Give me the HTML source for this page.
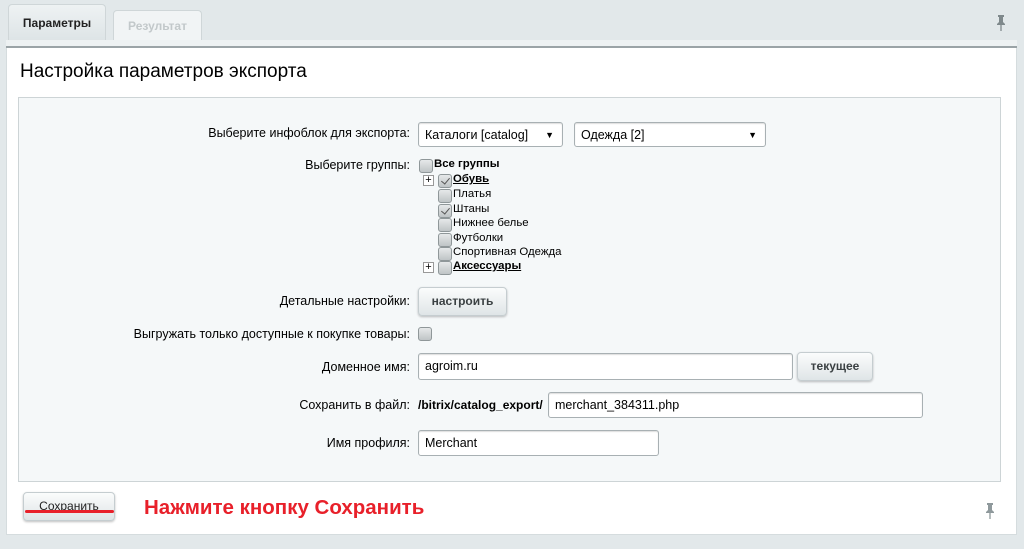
<!DOCTYPE html><html><head><meta charset="utf-8"><style>
*{box-sizing:border-box;margin:0;padding:0}
body{width:1024px;height:549px;background:#e2e8ea;font-family:"Liberation Sans",Arial,sans-serif;font-size:12px;color:#000;position:relative;overflow:hidden}
.a{position:absolute}
.tab{position:absolute;border:1px solid #cfd6d8;border-bottom:none;border-radius:4px 4px 0 0;font-weight:bold;font-size:12px;text-align:center}
.lbl{position:absolute;right:614px;font-size:12.5px;color:#000;white-space:nowrap}
.inp{position:absolute;background:#fff;border:1px solid #a8b0b3;border-radius:3px;box-shadow:inset 0 1px 1px #ddd;padding-left:6px;font-size:12.5px;line-height:24px}
.btn{position:absolute;border:1px solid #c5cdd0;border-radius:4px;background:linear-gradient(#fbfcfc,#dfe5e7);box-shadow:0 1px 2px rgba(0,0,0,.25);font-weight:bold;color:#3b4143;text-align:center;font-size:12px}
.cb{position:absolute;width:14px;height:14px;border:1px solid #8f9799;border-radius:3px;background:linear-gradient(#e6e8e9,#bfc4c6)}
.tr{position:absolute;font-size:11.4px;white-space:nowrap}
.pl{position:absolute;width:11px;height:11px;border:1px solid #999;background:#fff;font-size:11px;line-height:9px;text-align:center}
.ck::after{content:"";position:absolute;left:4px;top:1px;width:4px;height:7px;border:solid #555;border-width:0 1.5px 1.5px 0;transform:rotate(40deg)}
</style></head><body>
<div class="tab" style="left:8px;top:4px;width:98px;height:37px;background:linear-gradient(#eef2f3,#dde4e6);line-height:36px;color:#222">Параметры</div>
<div class="tab" style="left:113px;top:10px;width:89px;height:31px;background:#f1f4f5;line-height:30px;color:#c2c8ca">Результат</div>
<svg class="a" style="left:995px;top:14px" width="12" height="18" viewBox="0 0 12 18"><path d="M3 1h6v2H8v5l2 2v1H2v-1l2-2V3H3z" fill="#7f898c"/><path d="M6 11v6" stroke="#7f898c" stroke-width="1.3"/></svg>
<div class="a" style="left:6px;top:40px;width:1011px;height:8px;background:#edf1f2;border-bottom:2px solid #9aa3a6"></div>
<div class="a" style="left:6px;top:48px;width:1011px;height:487px;background:#fff;border:1px solid #d5dcde;border-top:none"></div>
<div class="a" style="left:20px;top:61px;font-size:19px;color:#000">Настройка параметров экспорта</div>
<div class="a" style="left:18px;top:97px;width:983px;height:385px;background:#f5f8f9;border:1px solid #cdd4d6"></div>

<div class="lbl" style="top:126px">Выберите инфоблок для экспорта:</div>
<div class="inp" style="left:418px;top:122px;width:145px;height:25px">Каталоги [catalog]<span class="a" style="right:8px;top:0;font-size:9px">▼</span></div>
<div class="inp" style="left:574px;top:122px;width:192px;height:25px">Одежда [2]<span class="a" style="right:8px;top:0;font-size:9px">▼</span></div>

<div class="lbl" style="top:158px">Выберите группы:</div>
<div class="cb" style="left:419px;top:159px"></div><div class="tr" style="left:434px;top:158px;font-weight:bold">Все группы</div>
<div class="pl" style="left:423px;top:175px">+</div><div class="cb ck" style="left:438px;top:174px"></div><div class="tr" style="left:453px;top:173px;font-weight:bold;text-decoration:underline">Обувь</div>
<div class="cb" style="left:438px;top:189px"></div><div class="tr" style="left:453px;top:188px">Платья</div>
<div class="cb ck" style="left:438px;top:204px"></div><div class="tr" style="left:453px;top:203px">Штаны</div>
<div class="cb" style="left:438px;top:218px"></div><div class="tr" style="left:453px;top:217px">Нижнее белье</div>
<div class="cb" style="left:438px;top:233px"></div><div class="tr" style="left:453px;top:232px">Футболки</div>
<div class="cb" style="left:438px;top:247px"></div><div class="tr" style="left:453px;top:246px">Спортивная Одежда</div>
<div class="pl" style="left:423px;top:262px">+</div><div class="cb" style="left:438px;top:261px"></div><div class="tr" style="left:453px;top:260px;font-weight:bold;text-decoration:underline">Аксессуары</div>

<div class="lbl" style="top:294px">Детальные настройки:</div>
<div class="btn" style="left:418px;top:287px;width:89px;height:29px;line-height:27px">настроить</div>
<div class="lbl" style="top:327px">Выгружать только доступные к покупке товары:</div>
<div class="cb" style="left:418px;top:327px"></div>
<div class="lbl" style="top:360px">Доменное имя:</div>
<div class="inp" style="left:418px;top:353px;width:375px;height:27px;line-height:25px">agroim.ru</div>
<div class="btn" style="left:797px;top:352px;width:76px;height:29px;line-height:27px">текущее</div>
<div class="lbl" style="top:398px">Сохранить в файл:</div>
<div class="a" style="left:418px;top:398px;font-weight:bold">/bitrix/catalog_export/</div>
<div class="inp" style="left:548px;top:392px;width:375px;height:26px">merchant_384311.php</div>
<div class="lbl" style="top:436px">Имя профиля:</div>
<div class="inp" style="left:418px;top:430px;width:241px;height:26px">Merchant</div>

<div class="btn" style="left:23px;top:492px;width:92px;height:29px;line-height:27px;font-weight:normal;color:#222">Сохранить</div>
<div class="a" style="left:25px;top:510px;width:89px;height:3px;background:#e8202a;border-radius:2px"></div>
<div class="a" style="left:144px;top:496px;font-size:20.5px;font-weight:bold;color:#e8202a">Нажмите кнопку Сохранить</div>
<svg class="a" style="left:984px;top:502px" width="12" height="18" viewBox="0 0 12 18"><path d="M3 1h6v2H8v5l2 2v1H2v-1l2-2V3H3z" fill="#8f999c"/><path d="M6 11v6" stroke="#8f999c" stroke-width="1.3"/></svg>
</body></html>
